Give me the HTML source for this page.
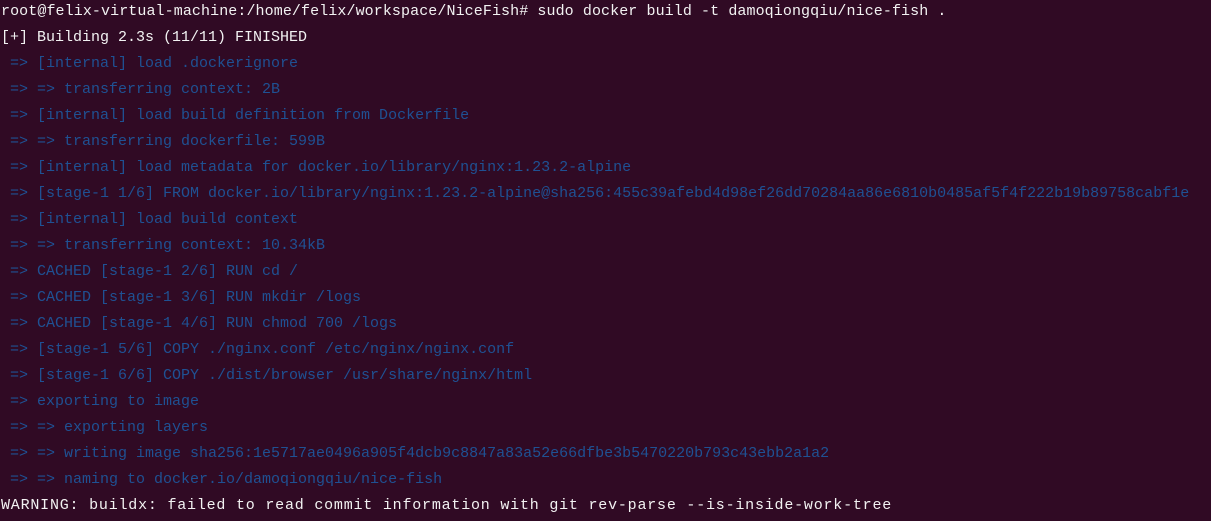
<!DOCTYPE html>
<html><head><style>
html,body{margin:0;padding:0;background:#300a24;width:1211px;height:521px;overflow:hidden}
pre{margin:0;position:absolute;left:1px;top:-1px;font-family:"Liberation Mono",monospace;font-size:15px;line-height:26px;color:#f2f2f2}
.b{color:#1f5193}
.w{letter-spacing:0.79px}
.l1{letter-spacing:0.09px}
</style></head><body><pre><span class="l1">root@felix-virtual-machine:/home/felix/workspace/NiceFish# sudo docker build -t damoqiongqiu/nice-fish .</span>
[+] Building 2.3s (11/11) FINISHED
<span class="b"> => [internal] load .dockerignore
 => => transferring context: 2B
 => [internal] load build definition from Dockerfile
 => => transferring dockerfile: 599B
 => [internal] load metadata for docker.io/library/nginx:1.23.2-alpine
 => [stage-1 1/6] FROM docker.io/library/nginx:1.23.2-alpine@sha256:455c39afebd4d98ef26dd70284aa86e6810b0485af5f4f222b19b89758cabf1e
 => [internal] load build context
 => => transferring context: 10.34kB
 => CACHED [stage-1 2/6] RUN cd /
 => CACHED [stage-1 3/6] RUN mkdir /logs
 => CACHED [stage-1 4/6] RUN chmod 700 /logs
 => [stage-1 5/6] COPY ./nginx.conf /etc/nginx/nginx.conf
 => [stage-1 6/6] COPY ./dist/browser /usr/share/nginx/html
 => exporting to image
 => => exporting layers
 => => writing image sha256:1e5717ae0496a905f4dcb9c8847a83a52e66dfbe3b5470220b793c43ebb2a1a2
 => => naming to docker.io/damoqiongqiu/nice-fish</span>
<span class="w">WARNING: buildx: failed to read commit information with git rev-parse --is-inside-work-tree</span></pre></body></html>
